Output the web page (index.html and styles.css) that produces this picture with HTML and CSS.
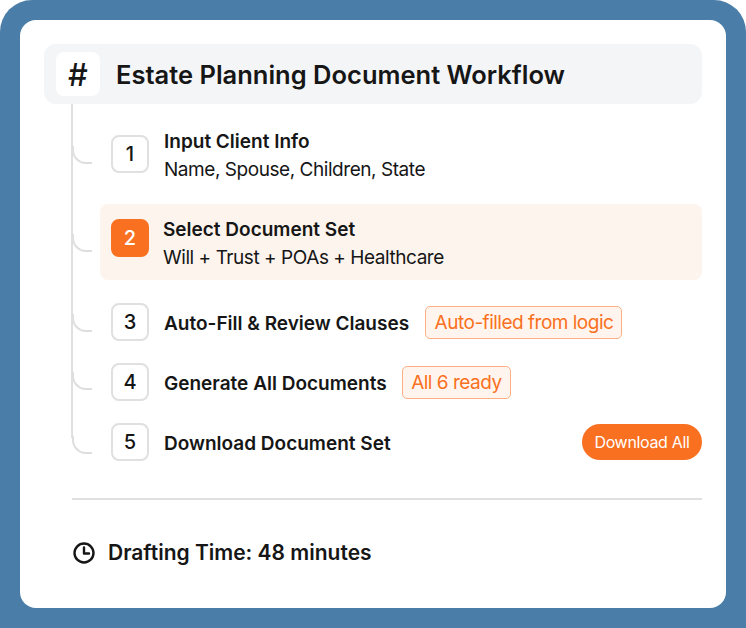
FILE: index.html
```html
<!DOCTYPE html>
<html lang="en">
<head>
<meta charset="utf-8">
<title>Estate Planning Document Workflow</title>
<link rel="stylesheet" href="styles.css">
</head>
<body>
<div class="frame">
  <main class="card">
    <header class="head">
      <span class="hash">#</span>
      <h1 class="title">Estate Planning Document Workflow</h1>
    </header>
    <ol class="steps">
      <li class="step step-info step-one">
        <span class="num">1</span>
        <div class="copy"><strong class="name">Input Client Info</strong><span class="desc">Name, Spouse, Children, State</span></div>
      </li>
      <li class="step step-info step-two">
        <span class="num num-active">2</span>
        <div class="copy"><strong class="name">Select Document Set</strong><span class="desc">Will + Trust + POAs + Healthcare</span></div>
      </li>
      <li class="step step-three">
        <span class="num">3</span>
        <strong class="name">Auto-Fill &amp; Review Clauses</strong>
        <span class="tag">Auto-filled from logic</span>
      </li>
      <li class="step step-four">
        <span class="num">4</span>
        <strong class="name">Generate All Documents</strong>
        <span class="tag">All 6 ready</span>
      </li>
      <li class="step step-five">
        <span class="num">5</span>
        <strong class="name">Download Document Set</strong>
        <button class="download" type="button">Download All</button>
      </li>
    </ol>
    <footer class="foot">
      <svg class="clock" viewBox="0 0 24 24" width="24" height="24" fill="none" stroke="#161616" stroke-width="2.4" stroke-linecap="round" stroke-linejoin="round" aria-hidden="true"><circle cx="12" cy="12" r="9.5"/><path d="M12 6.5V12.5H17"/></svg>
      <span class="time">Drafting Time: 48 minutes</span>
    </footer>
  </main>
</div>
</body>
</html>
```
FILE: styles.css
```css
* { box-sizing: border-box; }
html, body { margin: 0; padding: 0; background: #fff; }
body { width: 746px; height: 628px; overflow: hidden; font-family: "Inter", "Liberation Sans", sans-serif; color: #161616; }
.frame { width: 746px; height: 628px; padding: 20px; background: #4a7ea8; border-radius: 32px 32px 0 0; }
.card { width: 706px; height: 588px; padding: 24px 24px 0; background: #fff; border-radius: 16px; }
.head { display: flex; align-items: center; gap: 16px; height: 60px; padding-left: 12px; background: #f4f5f7; border-radius: 12px; }
.hash { display: flex; align-items: center; justify-content: center; width: 44px; height: 44px; background: #fff; border-radius: 8px; font-size: 31px; font-weight: 500; }
.title { margin: 2px 0 0; font-size: 25.5px; font-weight: 600; line-height: 30px; }
.steps { position: relative; margin: 0; padding: 13px 0 0 56px; list-style: none; }
.steps::before { content: ""; position: absolute; left: 27px; top: 0; height: 334px; width: 2px; background: #e0e0e0; }
.step { position: relative; display: flex; align-items: center; height: 60px; padding-left: 11px; }
.step::before { content: ""; position: absolute; left: -28px; width: 18px; height: 16px; border-left: 2px solid #dedede; border-bottom: 2px solid #dedede; border-bottom-left-radius: 14px; }
.step-one { height: 76px; margin-bottom: 11px; }
.step-one::before { top: 29px; }
.step-one .num { margin-bottom: 2px; }
.step-one .copy { margin-top: 2px; }
.step-two { height: 76px; margin-bottom: 12px; background: #fdf4ee; border-radius: 8px; }
.step-two::before { top: 30px; }
.step-two .num { margin-bottom: 8px; margin-right: 14px; }
.step-two .copy { margin-top: 4px; }
.step-three::before { top: 22px; }
.step-four::before { top: 20px; }
.step-five::before { top: 24px; }
.step-three .name, .step-four .name, .step-five .name { margin-top: 4px; }
.num { flex: none; display: flex; align-items: center; justify-content: center; width: 38px; height: 38px; margin-right: 15px; border: 2px solid #e0e0e0; border-radius: 8px; background: #fff; font-size: 20px; font-weight: 500; }
.num-active { background: #f97020; border-color: #f97020; color: #fff; }
.copy { display: flex; flex-direction: column; gap: 4px; }
.name { font-size: 19px; font-weight: 600; line-height: 24px; }
.desc { font-size: 19px; font-weight: 400; line-height: 24px; letter-spacing: -0.45px; }
.tag { margin-left: 16px; height: 33px; padding: 0 8px 0 8.5px; border: 1.5px solid #fdb084; border-radius: 5px; background: #fff5ee; color: #f97020; font-size: 19px; line-height: 32px; letter-spacing: -0.5px; }
.step-four .tag { margin-left: 15px; }
.download { margin-left: auto; width: 120px; height: 36px; padding: 0; border: 0; border-radius: 18px; background: #f97020; color: #fff; font-family: inherit; font-size: 16px; letter-spacing: -0.33px; }
.foot { display: flex; align-items: center; gap: 12px; margin: 26px 0 0 28px; padding: 41px 0 0; border-top: 2px solid #e0e0e0; }
.clock { flex: none; }
.time { font-size: 21px; font-weight: 600; line-height: 24px; }
```
